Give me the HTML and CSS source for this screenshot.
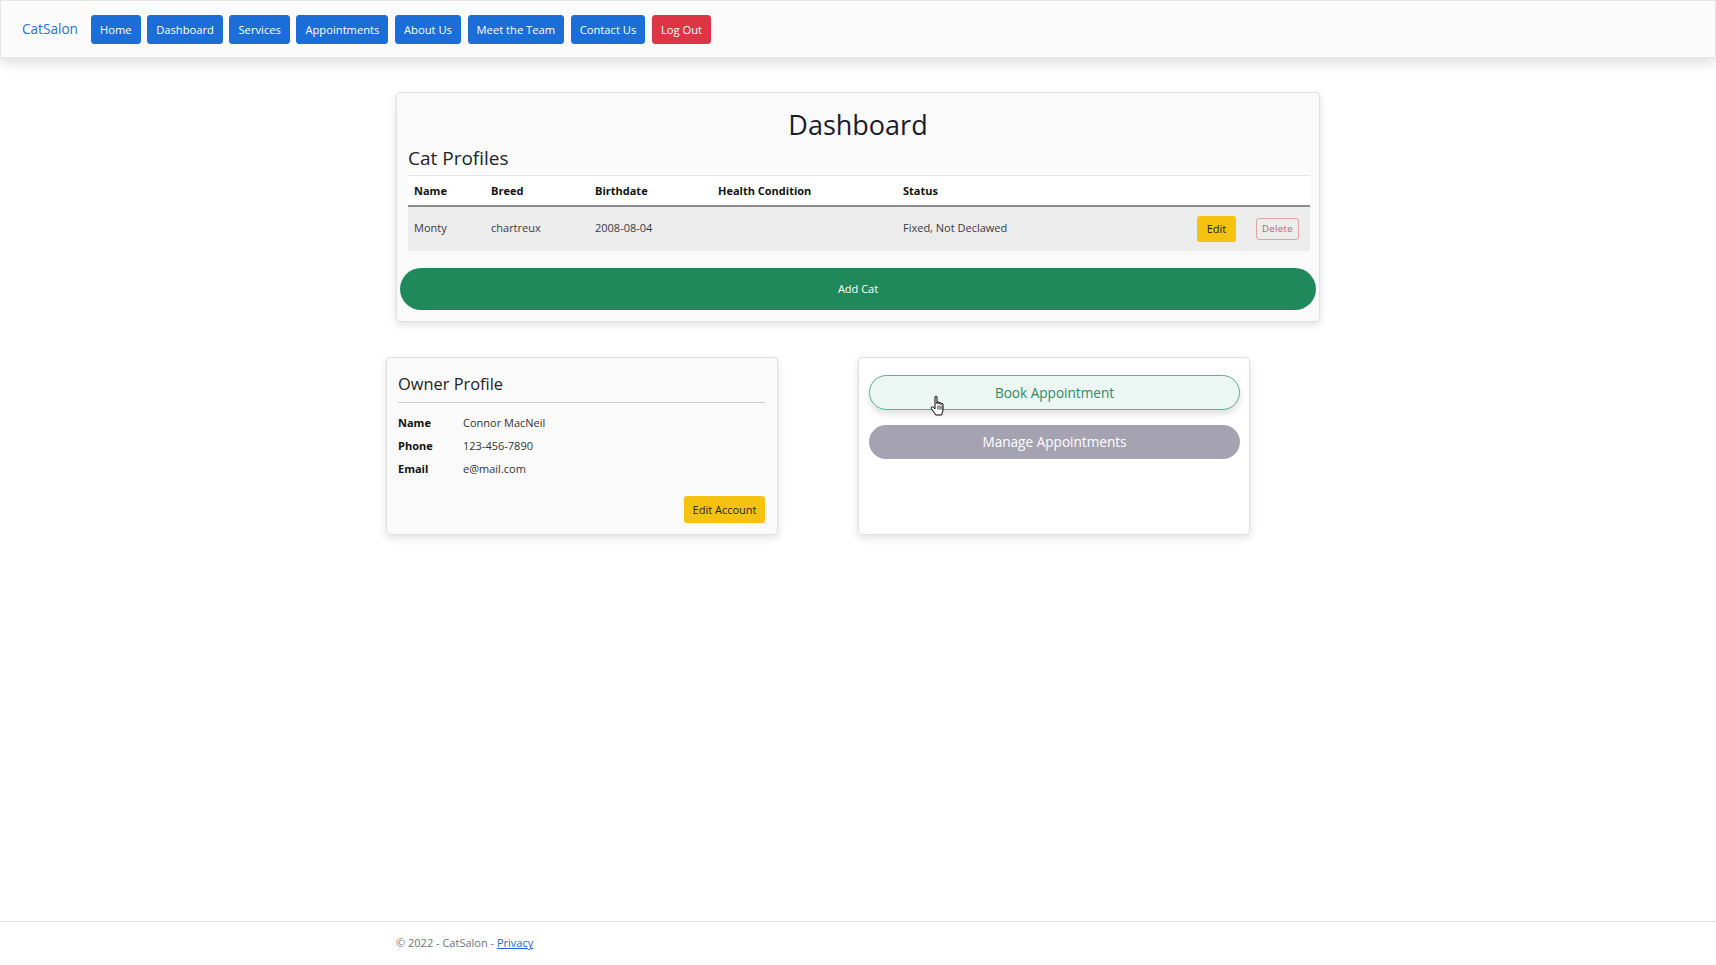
FILE: index.html
```html
<!DOCTYPE html>
<html lang="en">
<head>
<meta charset="utf-8">
<title>Dashboard - CatSalon</title>
<link rel="stylesheet" href="styles.css">
</head>
<body>
<header class="navbar">
  <a class="brand" href="#">CatSalon</a>
  <nav class="nav-links">
    <a class="nav-btn" href="#">Home</a>
    <a class="nav-btn" href="#">Dashboard</a>
    <a class="nav-btn" href="#">Services</a>
    <a class="nav-btn" href="#">Appointments</a>
    <a class="nav-btn" href="#">About Us</a>
    <a class="nav-btn" href="#">Meet the Team</a>
    <a class="nav-btn" href="#">Contact Us</a>
    <a class="nav-btn nav-btn-danger" href="#">Log Out</a>
  </nav>
</header>

<main class="container">
  <section class="card dash-card">
    <div class="dash-inner">
      <h1 class="title">Dashboard</h1>
      <h3 class="subtitle">Cat Profiles</h3>
      <table class="cat-table">
        <colgroup>
          <col class="c-name"><col class="c-breed"><col class="c-birth"><col class="c-health"><col class="c-status"><col class="c-edit"><col class="c-del">
        </colgroup>
        <thead>
          <tr><th>Name</th><th>Breed</th><th>Birthdate</th><th>Health Condition</th><th>Status</th><th></th><th></th></tr>
        </thead>
        <tbody>
          <tr class="row-active">
            <td>Monty</td><td>chartreux</td><td>2008-08-04</td><td></td><td>Fixed, Not Declawed</td>
            <td><a class="btn-edit" href="#">Edit</a></td>
            <td><a class="btn-delete" href="#">Delete</a></td>
          </tr>
        </tbody>
      </table>
    </div>
    <a class="btn-add" href="#">Add Cat</a>
  </section>

  <div class="card-row">
    <section class="card owner-card">
      <h4 class="owner-title">Owner Profile</h4>
      <hr class="divider">
      <dl class="owner-list">
        <dt>Name</dt><dd>Connor MacNeil</dd>
        <dt>Phone</dt><dd>123-456-7890</dd>
        <dt>Email</dt><dd>e@mail.com</dd>
      </dl>
      <div class="owner-actions"><a class="btn-account" href="#">Edit Account</a></div>
    </section>

    <section class="card appt-card">
      <a class="btn-book" href="#">Book Appointment</a>
      <a class="btn-manage" href="#">Manage Appointments</a>
      <svg class="cursor" width="18" height="22" viewBox="0 0 18 22" aria-hidden="true">
        <path d="M5 2 C5 0.8 7 0.8 7 2 L7 8.5 L7 7.6 C7 6.5 9 6.5 9 7.6 L9 9 L9 8.4 C9 7.3 11 7.3 11 8.4 L11 9.6 L11 9.2 C11 8.1 13 8.1 13 9.2 L13 14 C13 16.6 12 18 11.6 20 L5.8 20 C4.8 18.2 2.4 15.4 1.4 13.6 C0.7 12.3 2 11.1 3.1 12.1 L5 13.9 Z" fill="#fff" stroke="#000" stroke-width="1" stroke-linejoin="round"/>
        <path d="M8 10.5 V14.5 M10 10.5 V14.5 M12 10.8 V14.5" stroke="#000" stroke-width="0.8"/>
      </svg>
    </section>
  </div>
</main>

<footer class="footer">
  <div class="container footer-inner">© 2022 - CatSalon - <a class="footer-link" href="#">Privacy</a></div>
</footer>
</body>
</html>
```

FILE: styles.css
```css
* { box-sizing: border-box; }

html, body { height: 100%; }

body {
  margin: 0;
  font-family: "Open Sans", "Noto Sans", "DejaVu Sans", sans-serif;
  font-size: 11.2px;
  line-height: 1.5;
  color: #212529;
  background: #fff;
  display: flex;
  flex-direction: column;
  min-height: 100vh;
}

a { text-decoration: none; }

/* Navbar */
.navbar {
  height: 58px;
  display: flex;
  align-items: center;
  padding-left: 21px;
  background: #fbfbfb;
  border: 1px solid #e6e6e6;
  box-shadow: 0 6px 11px rgba(0, 0, 0, 0.12);
  flex-shrink: 0;
}

.brand {
  color: #2a72d4;
  font-size: 13.6px;
  margin-right: 13px;
}

.nav-links {
  display: flex;
  gap: 6.6px;
}

.nav-btn {
  display: block;
  height: 29px;
  line-height: 27px;
  padding: 0 8px;
  border: 1px solid #1b6ed8;
  border-radius: 3px;
  background: #1b6ed8;
  color: #fff;
  font-size: 11.2px;
  white-space: nowrap;
}

.nav-btn-danger {
  background: #dc3545;
  border-color: #dc3545;
}

/* Layout */
.container {
  width: 924px;
  margin: 0 auto;
}

main.container { flex: 1; }

.card {
  background: #fafafa;
  border: 1px solid #e0e0e0;
  border-radius: 4px;
  box-shadow: 0 3px 8px rgba(0, 0, 0, 0.12);
}

/* Dashboard card */
.dash-card {
  margin-top: 34px;
  padding: 3px 3px 11px;
}

.dash-inner { padding: 0 8px; }

.title {
  margin: 12px 0 5px;
  font-size: 27px;
  font-weight: 400;
  line-height: 1.25;
  text-align: center;
  color: #1a1a2a;
}

.subtitle {
  margin: 0 0 5.6px;
  font-size: 19px;
  font-weight: 400;
  line-height: 1.2;
  color: #212529;
}

.cat-table {
  width: 902px;
  table-layout: fixed;
  border-collapse: collapse;
  background: #fff;
}

.c-name { width: 77px; }
.c-breed { width: 104px; }
.c-birth { width: 123px; }
.c-health { width: 185px; }
.c-status { width: 294px; }
.c-edit { width: 59px; }
.c-del { width: 60px; }

.cat-table th {
  text-align: left;
  font-weight: 700;
  font-size: 11px;
  padding: 6px 6px 5px;
  border-top: 1px solid #e6e6e6;
  border-bottom: 2px solid #8a8a8a;
  height: 30px;
  color: #111;
}

.cat-table td {
  padding: 0 6px;
  height: 45px;
  vertical-align: middle;
  font-size: 11px;
  color: #3a3a48;
  white-space: nowrap;
}

.row-active td { background: #ececec; }

.btn-edit {
  display: inline-block;
  width: 39px;
  height: 26px;
  line-height: 26px;
  text-align: center;
  background: #f4c20f;
  border-radius: 3px;
  color: #212529;
  font-size: 11px;
}

.btn-delete {
  display: inline-block;
  width: 43px;
  height: 22px;
  line-height: 20px;
  text-align: center;
  border: 1px solid #e2a2aa;
  border-radius: 3px;
  color: #d4576a;
  font-size: 9.6px;
  letter-spacing: 0.3px;
}

.btn-add {
  display: block;
  margin-top: 17px;
  height: 42px;
  line-height: 42px;
  text-align: center;
  background: #20895b;
  color: #fff;
  border-radius: 21px;
  font-size: 11px;
}

/* Second row */
.card-row {
  display: flex;
  align-items: stretch;
  margin: 35px -10px 0;
}

.owner-card {
  width: 392px;
  padding: 11px 12px 11px 11px;
}

.owner-title {
  margin: 0;
  padding-top: 5px;
  font-size: 16.4px;
  font-weight: 400;
  line-height: 1.2;
  color: #212529;
}

.divider {
  margin: 9px 0 12px;
  border: 0;
  border-top: 1px solid #c6cbcf;
}

.owner-list {
  display: grid;
  grid-template-columns: 65px 1fr;
  row-gap: 6px;
  margin: 0;
}

.owner-list dt {
  font-weight: 700;
  font-size: 11px;
  line-height: 16.8px;
  color: #111;
}

.owner-list dd {
  margin: 0;
  font-size: 11px;
  line-height: 16.8px;
  color: #333;
}

.owner-actions {
  display: flex;
  justify-content: flex-end;
  margin-top: 18px;
}

.btn-account {
  display: block;
  height: 27px;
  line-height: 27px;
  padding: 0 8.5px;
  background: #f4c20f;
  border-radius: 3px;
  color: #212529;
  font-size: 11px;
}

.appt-card {
  position: relative;
  width: 392px;
  margin-left: 80px;
  padding: 17px 9px 10px 10px;
  background: #fff;
  display: flex;
  flex-direction: column;
  gap: 15px;
}

.btn-book {
  display: block;
  height: 35px;
  line-height: 33px;
  text-align: center;
  border: 1px solid #5fb08f;
  background: #ecf7f3;
  color: #2d8a68;
  border-radius: 18px;
  font-size: 13.6px;
  box-shadow: 0 4px 7px rgba(0, 0, 0, 0.13);
}

.btn-manage {
  display: block;
  height: 34px;
  line-height: 34px;
  text-align: center;
  background: #a5a2b1;
  color: #fff;
  border-radius: 17px;
  font-size: 13.6px;
}

.cursor {
  position: absolute;
  left: 71px;
  top: 37px;
}

/* Footer */
.footer {
  border-top: 1px solid #e3e3e3;
  height: 44px;
  flex-shrink: 0;
}

.footer-inner {
  line-height: 42px;
  color: #6c757d;
  font-size: 11px;
}

.footer-link {
  color: #1a66d6;
  text-decoration: underline;
}
```
